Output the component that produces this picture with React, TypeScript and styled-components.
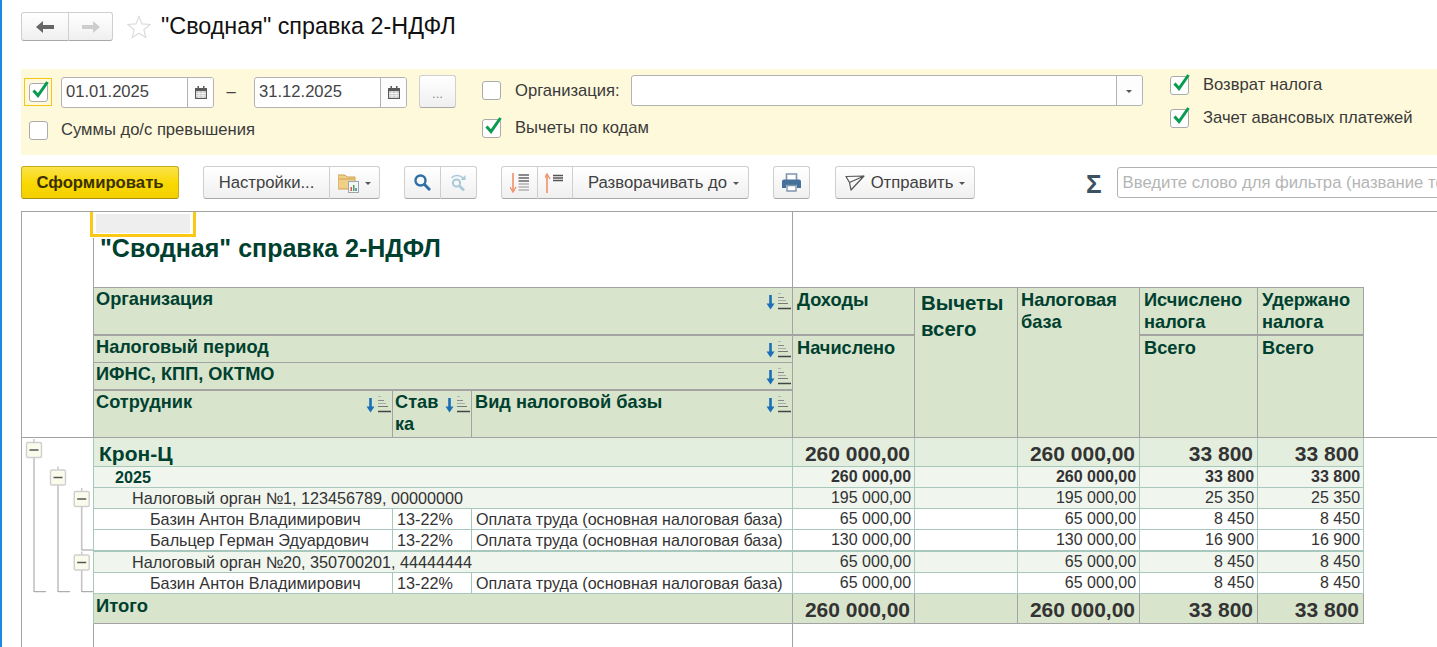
import React from 'react';
import styled, { createGlobalStyle, css } from 'styled-components';

const GlobalStyle = createGlobalStyle`
  html, body {
    margin: 0;
    padding: 0;
    height: 100%;
    background: #fff;
    overflow: hidden;
  }
  body {
    font-family: 'Liberation Sans', Arial, sans-serif;
    color: #333;
  }
`;

const Page = styled.div`
  height: 647px;
  width: 1437px;
  box-sizing: border-box;
  border-left: 2px solid #1e88e5;
  padding-left: 19px;
  overflow: hidden;
`;

const Header = styled.header`
  height: 69px;
  box-sizing: border-box;
  padding-top: 12px;
  display: flex;
  align-items: flex-start;
`;

const PageTitle = styled.h1`
  margin: 0 0 0 10px;
  font-size: 23.35px;
  line-height: 29px;
  font-weight: 400;
  color: #111;
`;

const StarBox = styled.div`
  margin: 3px 0 0 14px;
  height: 23px;
`;

const ButtonGroup = styled.div`
  display: inline-flex;
  height: 33px;
`;

const NavGroup = styled(ButtonGroup)`
  height: 29px;
`;

const Button = styled.button<{ $w?: number; $shift?: number }>`
  box-sizing: border-box;
  height: 100%;
  width: ${(p) => (p.$w ? `${p.$w}px` : 'auto')};
  padding: 0 0 0 ${(p) => p.$shift ?? 0}px;
  display: inline-flex;
  align-items: center;
  justify-content: center;
  gap: 6px;
  font: 400 16.7px 'Liberation Sans', Arial, sans-serif;
  color: #404040;
  background: linear-gradient(#ffffff, #f6f6f6 60%, #efefef);
  border: 1px solid #cfcfcf;
  border-bottom: 1px solid #a9a9a9;
  border-left-width: 0;
  white-space: nowrap;

  &:first-child {
    border-left-width: 1px;
    border-radius: 3px 0 0 3px;
  }
  &:last-child {
    border-radius: 0 3px 3px 0;
  }
  &:only-child {
    border-radius: 3px;
  }
`;

const PrimaryButton = styled(Button)`
  font-weight: 700;
  color: #3a3000;
  background: linear-gradient(#fbe34a, #f9d800 55%, #f4d000);
  border: 1px solid #c8ab1c;
  border-bottom-color: #a89012;
`;

const MoreButton = styled(Button)`
  padding-top: 4px;
  font-size: 13px;
  color: #888;
`;

const Caret = styled.span`
  display: inline-block;
  width: 0;
  height: 0;
  border-left: 3px solid transparent;
  border-right: 3px solid transparent;
  border-top: 3px solid #555;
  margin-top: 2px;
`;

const FilterPanel = styled.section`
  height: 86px;
  background: #fef9da;
  display: grid;
  grid-template-columns: 461px 688px 1fr;
  box-sizing: border-box;
  padding-top: 6px;
  font-size: 16.6px;
  color: #3a3a3a;
`;

const FilterColumn = styled.div`
  display: flex;
  flex-direction: column;
  align-items: flex-start;
`;

const DateRow = styled.div`
  height: 34px;
  display: flex;
  align-items: center;
  padding-left: 3px;
`;

const FieldRow = styled.div<{ $top?: number; $h?: number; $indent?: number; $gap?: number }>`
  display: flex;
  align-items: center;
  height: ${(p) => p.$h ?? 20}px;
  margin-top: ${(p) => p.$top ?? 0}px;
  margin-left: ${(p) => p.$indent ?? 0}px;
  gap: ${(p) => p.$gap ?? 14}px;
  white-space: nowrap;
`;

const CheckFrame = styled.div`
  box-sizing: border-box;
  width: 28px;
  height: 28px;
  border: 1px solid #f5c518;
  display: flex;
  align-items: center;
  justify-content: center;
  margin-right: 9px;
`;

const CheckBox = styled.div`
  position: relative;
  box-sizing: border-box;
  width: 19px;
  height: 19px;
  flex: none;
  background: #fff;
  border: 1px solid #ababab;
  border-radius: 3px;
`;

const CheckMark = styled.svg`
  position: absolute;
  left: 2px;
  top: -4px;
`;

const InputBox = styled.div<{ $w: number; $h?: number; $shift?: number }>`
  box-sizing: border-box;
  width: ${(p) => p.$w}px;
  height: ${(p) => p.$h ?? 31}px;
  margin-left: ${(p) => p.$shift ?? 0}px;
  display: flex;
  background: #fff;
  border: 1px solid #b3b3b3;
  border-radius: 3px;
  overflow: hidden;
`;

const InputValue = styled.div`
  flex: 1;
  padding-left: 4px;
  line-height: 27px;
  font-size: 16.6px;
  color: #444;
`;

const InputAction = styled.div`
  width: 25px;
  flex: none;
  border-left: 1px solid #b3b3b3;
  display: flex;
  align-items: center;
  justify-content: center;
  background: #fdfdfd;
`;

const RangeDash = styled.div`
  box-sizing: border-box;
  width: 40px;
  padding-right: 6px;
  text-align: center;
  color: #444;
`;

const MoreHolder = styled.div`
  height: 33px;
  margin-left: 12px;
  margin-top: -1px;
  display: flex;
`;

const Toolbar = styled.div`
  margin-top: 11px;
  height: 33px;
  display: flex;
  align-items: center;
`;

const ToolSpacer = styled.div<{ $w: number }>`
  width: ${(p) => p.$w}px;
  flex: none;
`;

const SigmaGlyph = styled.span`
  padding-top: 3px;
  width: 17px;
  text-align: center;
  font-size: 26px;
  font-weight: 700;
  line-height: 30px;
  color: #3c5263;
`;

const FilterInput = styled.div`
  box-sizing: border-box;
  flex: none;
  width: 340px;
  height: 31px;
  padding-left: 5px;
  line-height: 30px;
  font-size: 16.7px;
  white-space: nowrap;
  overflow: hidden;
  color: #b5b5b5;
  border: 1px solid #b3b3b3;
  border-radius: 3px;
`;

const Sheet = styled.div`
  position: relative;
  margin-top: 12px;
  height: 436px;
  border-top: 1px solid #a3a3a3;
  border-left: 1px solid #a3a3a3;
  overflow: hidden;
`;

const CellSelection = styled.div`
  position: absolute;
  left: 66px;
  top: 0;
  width: 108px;
  height: 26px;
  box-sizing: border-box;
  background: #fff;
  &::before {
    content: '';
    position: absolute;
    left: 2px;
    right: 0;
    top: 0;
    bottom: 1px;
    border: 3px solid #fcc816;
    border-top: 0;
    box-sizing: border-box;
  }
  &::after {
    content: '';
    position: absolute;
    left: 8px;
    right: 6px;
    top: 2px;
    bottom: 5px;
    background: #eeeeee;
  }
`;

const Table = styled.table`
  width: 1415px;
  table-layout: fixed;
  border-collapse: separate;
  border-spacing: 0;
`;

const Row = styled.tr<{ $h: number }>`
  height: ${(p) => p.$h}px;
`;

const Gutter = styled.td<{ $line: string; $closed?: boolean }>`
  padding: 0;
  vertical-align: top;
  border-right: 1px solid ${(p) => p.$line};
  ${(p) => p.$closed && 'border-bottom: 1px solid #a3a3a3;'}
  svg {
    display: block;
  }
`;

const TitleCell = styled.td`
  padding: 23px 0 0 6px;
  vertical-align: top;
  border-right: 1px solid #a3a3a3;
  border-bottom: 1px solid #a3a3a3;
  font-size: 25px;
  line-height: 27px;
  font-weight: 700;
  color: #00402f;
  white-space: nowrap;
`;

const BlankCell = styled.td<{ $bottom?: boolean }>`
  padding: 0;
  ${(p) => p.$bottom && 'border-bottom: 1px solid #a3a3a3;'}
`;

const HeadCell = styled.th<{ $thick?: boolean; $pad?: number; $big?: boolean }>`
  padding: 0 0 0 ${(p) => p.$pad ?? 2}px;
  vertical-align: top;
  text-align: left;
  background: #d8e4cc;
  color: #00402f;
  font-size: 18.2px;
  line-height: 22px;
  font-weight: 700;
  white-space: nowrap;
  border-right: 1px solid #a3a3a3;
  border-bottom: ${(p) => (p.$thick ? 2 : 1)}px solid #a3a3a3;
  ${(p) =>
    p.$big &&
    css`
      padding-top: 2px;
      font-size: 20.4px;
      line-height: 26px;
    `}
`;

const MeasureHead = styled(HeadCell)`
  padding-top: 1px;
`;

const HeadInner = styled.div`
  display: flex;
  justify-content: space-between;
  align-items: flex-start;
`;

const SortIcon = styled.svg`
  flex: none;
  margin-top: 5px;
`;

type Kind = 'org' | 'year' | 'group' | 'item' | 'total';

const kindStyles: Record<Kind, ReturnType<typeof css>> = {
  org: css`
    padding-top: 3px;
    background: #e4eedf;
    font-size: 21px;
    font-weight: 700;
  `,
  year: css`
    background: #f0f5ee;
    font-weight: 700;
  `,
  group: css`
    background: #f0f5ee;
  `,
  item: css`
    background: #fff;
  `,
  total: css`
    padding-top: 3px;
    background: #d8e4cc;
    font-size: 21px;
    font-weight: 700;
    border-color: #a3a3a3;
  `,
};

const Cell = styled.td<{ $kind: Kind; $thick?: boolean; $indent?: number; $num?: boolean }>`
  padding: 0 ${(p) => (p.$num ? (p.$kind === 'org' || p.$kind === 'total' ? 4 : 3) : 0)}px 0
    ${(p) => p.$indent ?? 4}px;
  font-size: ${(p) => (p.$num ? 16 : 16.2)}px;
  line-height: 20px;
  color: #333;
  white-space: nowrap;
  text-align: ${(p) => (p.$num ? 'right' : 'left')};
  border-right: 1px solid #a9c8bd;
  border-bottom: ${(p) => (p.$thick ? 2 : 1)}px solid #a9c8bd;
  ${(p) => kindStyles[p.$kind]}
`;

const TypeCell = styled(Cell)`
  font-size: 16.1px;
`;

const RowTitle = styled(Cell)`
  padding-top: 1px;
  color: #00402f;
  font-size: 18.4px;
  line-height: 22px;
  vertical-align: top;
`;

const RowLabel = styled(Cell)`
  ${(p) => p.$kind === 'year' && 'color: #00402f;'}
  ${(p) => p.$kind === 'org' && 'color: #00402f;'}
`;

const TailCell = styled.td`
  padding: 0;
  border-right: 1px solid #a3a3a3;
`;

const LeftOverCell = styled.td`
  padding: 0;
`;

const Cols = () => (
  <colgroup>
    {[72, 299, 79, 321, 122, 103, 122, 118, 106, 73].map((w, i) => (
      <col key={i} width={w} />
    ))}
  </colgroup>
);

const ArrowIcon = ({ dir, color }: { dir: 'left' | 'right'; color: string }) => (
  <svg width="18" height="12" viewBox="0 0 18 12">
    <path
      d={dir === 'left' ? 'M0 6 7 0v4h11v4H7v4z' : 'M18 6 11 0v4H0v4h11v4z'}
      fill={color}
    />
  </svg>
);

const StarIcon = () => (
  <svg width="24" height="24" viewBox="0 0 24 24">
    <path
      d="M12 1.5l3 7.4 8 .6-6.100 5.200 1.900 7.800L12 18.300 5.200 22.500l1.900-7.800L1 9.500l8-.6z"
      fill="#fff"
      stroke="#dcdcdc"
      strokeWidth="1.200"
    />
  </svg>
);

const Check = () => (
  <CheckMark width="17" height="18" viewBox="0 0 17 18">
    <path d="M1.500 10.500l4.500 5L15.500 2" fill="none" stroke="#0a9a50" strokeWidth="3" />
  </CheckMark>
);

const CalendarIcon = () => (
  <svg width="12" height="13" viewBox="0 0 12 13">
    <path d="M2.500 0h1.500v2h4V0h1.500v2H12v11H0V2h2.500z" fill="#5a5a5a" />
    <rect x="1" y="5" width="10" height="7" fill="#c9c9c9" />
    <path d="M1 7.500h10M1 9.800h10M4 5v7M8 5v7" stroke="#fff" strokeWidth=".7" />
  </svg>
);

const FolderChartIcon = () => (
  <svg width="21" height="20" viewBox="0 0 21 20">
    <path d="M0 2h7l2 2h8v12H0z" fill="#f0cf86" stroke="#cfa355" />
    <path d="M1 6h15" stroke="#cfa355" />
    <rect x="10.500" y="8.500" width="10" height="11" fill="#f4f6f6" stroke="#9aa7ad" />
    <rect x="12.500" y="14" width="1.500" height="4" fill="#d9534f" />
    <rect x="15" y="12" width="1.500" height="6" fill="#4d9e58" />
    <rect x="17.300" y="15" width="1.500" height="3" fill="#4a78b0" />
  </svg>
);

const SearchIcon = () => (
  <svg width="17" height="17" viewBox="0 0 17 17">
    <circle cx="6.500" cy="6.500" r="5" fill="none" stroke="#2f6fa6" strokeWidth="2.400" />
    <path d="M10.500 10.500l5.500 5.500" stroke="#2f6fa6" strokeWidth="3" />
  </svg>
);

const SearchRepeatIcon = () => (
  <svg width="17" height="17" viewBox="0 0 17 17">
    <circle cx="6.500" cy="9" r="3.600" fill="none" stroke="#a9c9d8" strokeWidth="2" />
    <path d="M9.500 12l4.500 4.500" stroke="#a9c9d8" strokeWidth="2.600" />
    <path d="M1.500 4C4 .8 10 .6 13 4" fill="none" stroke="#a9c9d8" strokeWidth="1.600" />
    <path d="M15.500 1v5h-5z" fill="#a9c9d8" />
  </svg>
);

const SortDownIcon = () => (
  <svg width="20" height="20" viewBox="0 0 20 20">
    <path d="M3 0v18" stroke="#f0906a" strokeWidth="1.600" />
    <path d="M0 14l3 5 3-5" fill="none" stroke="#f0906a" strokeWidth="1.400" />
    {[2, 5, 8, 11, 14, 17].map((y, i) => (
      <path key={y} d={`M8.500 ${y}H19`} stroke={i < 3 ? '#666' : '#b0b0b0'} strokeWidth="1.500" />
    ))}
  </svg>
);

const SortUpIcon = () => (
  <svg width="20" height="20" viewBox="0 0 20 20">
    <path d="M2 2v18" stroke="#f0906a" strokeWidth="1.600" />
    <path d="M-1 6l3-5 3 5" fill="none" stroke="#f0906a" strokeWidth="1.400" />
    {[2.500, 5, 7.500].map((y) => (
      <path key={y} d={`M8 ${y}H18`} stroke="#555" strokeWidth="1.500" />
    ))}
  </svg>
);

const PrinterIcon = () => (
  <svg width="19" height="19" viewBox="0 0 19 19">
    <path d="M4.500 7V1h10v6" fill="#fff" stroke="#7e95ad" strokeWidth="1.600" />
    <path d="M0 8.500a2 2 0 0 1 2-2h15a2 2 0 0 1 2 2V15h-4v-3H4v3H0z" fill="#45709c" />
    <path d="M5 12.500h9v5.500H5z" fill="#fff" stroke="#7e95ad" strokeWidth="1.400" />
  </svg>
);

const SendIcon = () => (
  <svg width="20" height="16" viewBox="0 0 20 16">
    <path
      d="M1 1.500L19 1 6 15 4.500 7.500zM4.500 7.500L19 1"
      fill="none"
      stroke="#555"
      strokeWidth="1.200"
      strokeLinejoin="round"
    />
  </svg>
);

const HeadSort = () => (
  <SortIcon width="26" height="18" viewBox="0 0 26 18">
    <path d="M4.500 2v11" stroke="#1a6fb5" strokeWidth="2.600" />
    <path d="M0.500 10.500h8L4.500 16.500z" fill="#1a6fb5" />
    <path d="M12 0.500h3" stroke="#b5b5b5" />
    <path d="M12 4.500h6" stroke="#888" />
    <path d="M12 7.500h8" stroke="#aaa" />
    <path d="M12 10.500h10" stroke="#777" />
    <path d="M12 15.500h13" stroke="#444" strokeWidth="1.500" />
  </SortIcon>
);

const TreeBox = ({ x, y }: { x: number; y: number }) => (
  <g>
    <path d={`M${x} ${y - 11}v3`} stroke="#c8c8c8" strokeWidth="1.500" />
    <rect x={x - 7.500} y={y - 7.500} width="15" height="15" rx="1.500" fill="#fbfbec" stroke="#cfcfcf" strokeWidth="1.400" />
    <path d={`M${x - 4.500} ${y}h9`} stroke="#555" strokeWidth="1.500" />
  </g>
);

const TreeLines = () => (
  <svg width="71" height="186" viewBox="22 438 71 186">
    <path d="M34 458v134M58 485v107M81.700 507v43M81.700 570v22" stroke="#c4c4c4" strokeWidth="1.600" fill="none" />
    <path d="M34 591.700h12M58 591.700h12M81.700 591.700H93M81.700 550H93" stroke="#9a9a9a" fill="none" />
    <TreeBox x={34} y={450} />
    <TreeBox x={58} y={477.500} />
    <TreeBox x={81.700} y={499} />
    <TreeBox x={81.700} y={562.500} />
  </svg>
);

type DataRow = {
  kind: Kind;
  h: number;
  indent: number;
  label: string;
  rate?: string;
  type?: string;
  income: string;
  base: string;
  calc: string;
  held: string;
  thick?: boolean;
};

const TYPE_LABEL = 'Оплата труда (основная налоговая база)';

const rows: DataRow[] = [
  { kind: 'org', h: 29, indent: 5, label: 'Крон-Ц', income: '260 000,00', base: '260 000,00', calc: '33 800', held: '33 800' },
  { kind: 'year', h: 21, indent: 21, label: '2025', income: '260 000,00', base: '260 000,00', calc: '33 800', held: '33 800' },
  { kind: 'group', h: 21, indent: 38, label: 'Налоговый орган №1, 123456789, 00000000', income: '195 000,00', base: '195 000,00', calc: '25 350', held: '25 350' },
  { kind: 'item', h: 21, indent: 56, label: 'Базин Антон Владимирович', rate: '13-22%', type: TYPE_LABEL, income: '65 000,00', base: '65 000,00', calc: '8 450', held: '8 450' },
  { kind: 'item', h: 22, indent: 56, label: 'Бальцер Герман Эдуардович', rate: '13-22%', type: TYPE_LABEL, income: '130 000,00', base: '130 000,00', calc: '16 900', held: '16 900', thick: true },
  { kind: 'group', h: 21, indent: 38, label: 'Налоговый орган №20, 350700201, 44444444', income: '65 000,00', base: '65 000,00', calc: '8 450', held: '8 450' },
  { kind: 'item', h: 21, indent: 56, label: 'Базин Антон Владимирович', rate: '13-22%', type: TYPE_LABEL, income: '65 000,00', base: '65 000,00', calc: '8 450', held: '8 450' },
];

const App: React.FC = () => {
  return (
    <Page>
      <GlobalStyle />
      <Header>
        <NavGroup>
          <Button $w={48}><ArrowIcon dir="left" color="#666" /></Button>
          <Button $w={44}><ArrowIcon dir="right" color="#cdcdcd" /></Button>
        </NavGroup>
        <StarBox><StarIcon /></StarBox>
        <PageTitle>"Сводная" справка 2-НДФЛ</PageTitle>
      </Header>

      <FilterPanel>
        <FilterColumn>
          <DateRow>
            <CheckFrame>
              <CheckBox><Check /></CheckBox>
            </CheckFrame>
            <InputBox $w={153}>
              <InputValue>01.01.2025</InputValue>
              <InputAction><CalendarIcon /></InputAction>
            </InputBox>
            <RangeDash>–</RangeDash>
            <InputBox $w={153}>
              <InputValue>31.12.2025</InputValue>
              <InputAction><CalendarIcon /></InputAction>
            </InputBox>
            <MoreHolder>
              <MoreButton $w={37}>...</MoreButton>
            </MoreHolder>
          </DateRow>
          <FieldRow $top={9} $h={24} $indent={8} $gap={13}>
            <CheckBox />
            <span>Суммы до/с превышения</span>
          </FieldRow>
        </FilterColumn>

        <FilterColumn>
          <FieldRow $h={31}>
            <CheckBox />
            <span>Организация:</span>
            <InputBox $w={512} $shift={-3}>
              <InputValue />
              <InputAction><Caret /></InputAction>
            </InputBox>
          </FieldRow>
          <FieldRow $top={12}>
            <CheckBox><Check /></CheckBox>
            <span>Вычеты по кодам</span>
          </FieldRow>
        </FilterColumn>

        <FilterColumn>
          <FieldRow>
            <CheckBox><Check /></CheckBox>
            <span>Возврат налога</span>
          </FieldRow>
          <FieldRow $top={13}>
            <CheckBox><Check /></CheckBox>
            <span>Зачет авансовых платежей</span>
          </FieldRow>
        </FilterColumn>
      </FilterPanel>

      <Toolbar>
        <ButtonGroup><PrimaryButton $w={158}>Сформировать</PrimaryButton></ButtonGroup>
        <ToolSpacer $w={24} />
        <ButtonGroup>
          <Button $w={127}>Настройки...</Button>
          <Button $w={50}><FolderChartIcon /><Caret /></Button>
        </ButtonGroup>
        <ToolSpacer $w={24} />
        <ButtonGroup>
          <Button $w={37}><SearchIcon /></Button>
          <Button $w={36}><SearchRepeatIcon /></Button>
        </ButtonGroup>
        <ToolSpacer $w={24} />
        <ButtonGroup>
          <Button $w={37}><SortDownIcon /></Button>
          <Button $w={35}><SortUpIcon /></Button>
          <Button $w={176} $shift={6}>Разворачивать до <Caret /></Button>
        </ButtonGroup>
        <ToolSpacer $w={24} />
        <ButtonGroup><Button $w={37}><PrinterIcon /></Button></ButtonGroup>
        <ToolSpacer $w={25} />
        <ButtonGroup><Button $w={140}><SendIcon />Отправить <Caret /></Button></ButtonGroup>
        <ToolSpacer $w={111} />
        <SigmaGlyph>Σ</SigmaGlyph>
        <ToolSpacer $w={15} />
        <FilterInput>Введите слово для фильтра (название то</FilterInput>
      </Toolbar>

      <Sheet>
        <CellSelection />
        <Table>
          <Cols />
          <tbody>
            <Row $h={76}>
              <Gutter rowSpan={5} $line="#a3a3a3" $closed />
              <TitleCell colSpan={3}>"Сводная" справка 2-НДФЛ</TitleCell>
              <BlankCell colSpan={5} $bottom />
              <BlankCell rowSpan={5} $bottom />
            </Row>
            <Row $h={48}>
              <HeadCell colSpan={3} $thick>
                <HeadInner>Организация<HeadSort /></HeadInner>
              </HeadCell>
              <MeasureHead $thick $pad={4}>Доходы</MeasureHead>
              <HeadCell rowSpan={4} $pad={6} $big>Вычеты<br />всего</HeadCell>
              <MeasureHead rowSpan={4} $pad={3}>Налоговая<br />база</MeasureHead>
              <MeasureHead $thick $pad={4}>Исчислено<br />налога</MeasureHead>
              <MeasureHead $thick $pad={4}>Удержано<br />налога</MeasureHead>
            </Row>
            <Row $h={27}>
              <HeadCell colSpan={3}>
                <HeadInner>Налоговый период<HeadSort /></HeadInner>
              </HeadCell>
              <MeasureHead rowSpan={3} $pad={4}>Начислено</MeasureHead>
              <MeasureHead rowSpan={3} $pad={4}>Всего</MeasureHead>
              <MeasureHead rowSpan={3} $pad={4}>Всего</MeasureHead>
            </Row>
            <Row $h={28}>
              <HeadCell colSpan={3} $thick>
                <HeadInner>ИФНС, КПП, ОКТМО<HeadSort /></HeadInner>
              </HeadCell>
            </Row>
            <Row $h={47}>
              <HeadCell><HeadInner>Сотрудник<HeadSort /></HeadInner></HeadCell>
              <HeadCell><HeadInner><span>Став<br />ка</span><HeadSort /></HeadInner></HeadCell>
              <HeadCell $pad={3}><HeadInner>Вид налоговой базы<HeadSort /></HeadInner></HeadCell>
            </Row>

            {rows.map((row, i) => (
              <Row $h={row.h} key={i}>
                {i === 0 && (
                  <Gutter rowSpan={8} $line="#a9c8bd"><TreeLines /></Gutter>
                )}
                {row.rate ? (
                  <>
                    <RowLabel $kind={row.kind} $thick={row.thick} $indent={row.indent}>{row.label}</RowLabel>
                    <Cell $kind={row.kind} $thick={row.thick}>{row.rate}</Cell>
                    <TypeCell $kind={row.kind} $thick={row.thick}>{row.type}</TypeCell>
                  </>
                ) : (
                  <RowLabel colSpan={3} $kind={row.kind} $thick={row.thick} $indent={row.indent}>
                    {row.label}
                  </RowLabel>
                )}
                <Cell $kind={row.kind} $thick={row.thick} $num>{row.income}</Cell>
                <Cell $kind={row.kind} $thick={row.thick} />
                <Cell $kind={row.kind} $thick={row.thick} $num>{row.base}</Cell>
                <Cell $kind={row.kind} $thick={row.thick} $num>{row.calc}</Cell>
                <Cell $kind={row.kind} $thick={row.thick} $num>{row.held}</Cell>
                <LeftOverCell />
              </Row>
            ))}

            <Row $h={30}>
              <RowTitle colSpan={3} $kind="total" $indent={2}>Итого</RowTitle>
              <Cell $kind="total" $num>260 000,00</Cell>
              <Cell $kind="total" />
              <Cell $kind="total" $num>260 000,00</Cell>
              <Cell $kind="total" $num>33 800</Cell>
              <Cell $kind="total" $num>33 800</Cell>
              <LeftOverCell />
            </Row>
            <Row $h={40}>
              <Gutter $line="#a3a3a3" />
              <TailCell colSpan={3} />
              <LeftOverCell colSpan={6} />
            </Row>
          </tbody>
        </Table>
      </Sheet>
    </Page>
  );
};

export default App;
